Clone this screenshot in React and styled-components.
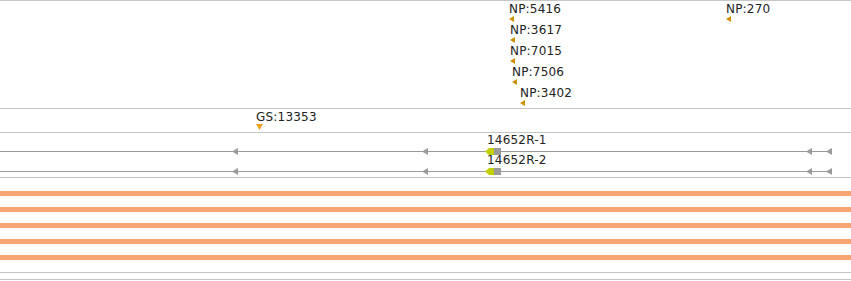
import styled, { createGlobalStyle } from "styled-components";

const GlobalStyle = createGlobalStyle`
  html, body {
    margin: 0;
    padding: 0;
    background: #ffffff;
  }
  body {
    font-family: "DejaVu Sans", "Liberation Sans", sans-serif;
  }
`;

const npFeatures = [
  { key: "np1", label: "NP:5416", x: 509, y: 2 },
  { key: "np2", label: "NP:3617", x: 510, y: 23 },
  { key: "np3", label: "NP:7015", x: 510, y: 44 },
  { key: "np4", label: "NP:7506", x: 512, y: 65 },
  { key: "np5", label: "NP:3402", x: 520, y: 86 },
  { key: "np6", label: "NP:270", x: 726, y: 2 },
];

const transcripts = [
  { key: "t1", label: "14652R-1" },
  { key: "t2", label: "14652R-2" },
];

const intronArrows = [232, 422, 806, 826];

const Browser = styled.div`
  width: 851px;
  height: 281px;
  overflow: hidden;
  border-top: 1px solid #c6c6c6;
  display: flex;
  flex-direction: column;
`;

const Track = styled.div`
  position: relative;
  height: ${({ $height }) => $height}px;
  border-bottom: 1px solid #c6c6c6;
  flex-shrink: 0;
`;

const Feature = styled.div`
  position: absolute;
  display: flex;
  flex-direction: column;
  align-items: flex-start;
  gap: 1px;
`;

const Label = styled.span`
  font-size: 12px;
  line-height: 12px;
  letter-spacing: 0.2px;
  color: #222;
  white-space: nowrap;
`;

const TranscriptRow = styled.div`
  position: relative;
  height: 20px;
`;

const TranscriptLabel = styled(Label)`
  position: absolute;
  left: 487px;
  top: 1px;
`;

const IntronLine = styled.div`
  position: absolute;
  left: 0;
  top: 18px;
  width: 832px;
  height: 1px;
  background: #9a9a9a;
`;

const Marker = styled.svg`
  position: absolute;
  top: 15px;
  left: ${({ $x }) => $x}px;
  display: block;
`;

const Exon = styled.svg`
  position: absolute;
  left: 485px;
  top: 15px;
  display: block;
`;

const BarStack = styled.div`
  display: flex;
  flex-direction: column;
  gap: 11px;
  padding: 13px 0 12px;
  border-bottom: 1px solid #c6c6c6;
  flex-shrink: 0;
`;

const CoverageBar = styled.div`
  height: 5px;
  background: #f4a572;
`;

const LeftTriangle = ({ color = "#cc9000" }) => (
  <svg width="5" height="6" viewBox="0 0 5 6">
    <polygon points="0,3 5,0 5,6" fill={color} />
  </svg>
);

const DownTriangle = () => (
  <svg width="7" height="6" viewBox="0 0 7 6">
    <polygon points="0,0 7,0 3.5,6" fill="#f0a020" />
  </svg>
);

const TranscriptTrack = () => (
  <Track $height={44}>
    {transcripts.map((t) => (
      <TranscriptRow key={t.key}>
        <TranscriptLabel>{t.label}</TranscriptLabel>
        <IntronLine />
        {intronArrows.map((x) => (
          <Marker key={x} $x={x} width="6" height="7" viewBox="0 0 6 7">
            <polygon points="0,3.5 6,0 6,7" fill="#9a9a9a" />
          </Marker>
        ))}
        <Exon width="16" height="7" viewBox="0 0 16 7">
          <polygon points="0,3.5 4,0 9,0 9,7 4,7" fill="#c3d000" />
          <rect x="9" y="0" width="7" height="7" fill="#9a9a9a" />
        </Exon>
      </TranscriptRow>
    ))}
  </Track>
);

export default function App() {
  return (
    <>
      <GlobalStyle />
      <Browser>
        <Track $height={107}>
          {npFeatures.map((f) => (
            <Feature key={f.key} style={{ left: f.x, top: f.y }}>
              <Label>{f.label}</Label>
              <LeftTriangle />
            </Feature>
          ))}
        </Track>
        <Track $height={23}>
          <Feature style={{ left: 256, top: 2 }}>
            <Label>GS:13353</Label>
            <DownTriangle />
          </Feature>
        </Track>
        <TranscriptTrack />
        <BarStack>
          {[0, 1, 2, 3, 4].map((i) => (
            <CoverageBar key={i} />
          ))}
        </BarStack>
        <Track $height={6} />
      </Browser>
    </>
  );
}
